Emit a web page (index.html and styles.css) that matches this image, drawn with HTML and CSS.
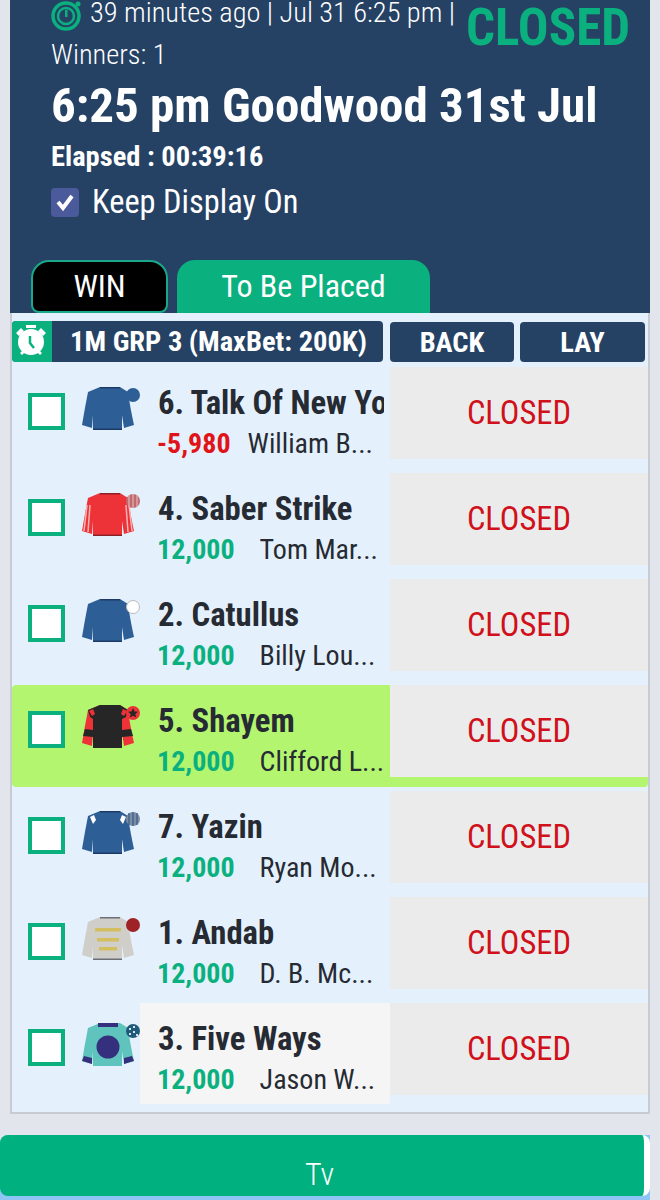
FILE: index.html
```html
<!DOCTYPE html>
<html lang="en">
<head>
<meta charset="UTF-8">
<meta name="viewport" content="width=device-width, initial-scale=1.0">
<title>6:25 pm Goodwood 31st Jul</title>
<link rel="stylesheet" href="styles.css">
</head>
<body>

<svg class="defs" width="0" height="0">
    <symbol id="shirt" viewBox="0 0 52 43">
        <path d="M18 0H38L46 5Q48 20 52 38L42 41L40 28V43H11V28L10 41L0 38Q3 20 6 5Z"/>
    </symbol>
</svg>

<div class="page">
    <header class="race-head">
        <div class="meta-top">
            <div class="meta">
                <div class="meta-line">
                    <svg class="timer" viewBox="0 0 30 32">
                        <circle cx="15" cy="16" r="13" fill="none" stroke="#0bb07f" stroke-width="3.500"/>
                        <circle cx="15" cy="16" r="8" fill="none" stroke="#0bb07f" stroke-width="2.500"/>
                        <path d="M14 10h2.500v7H14z" fill="#0bb07f"/>
                        <circle cx="27" cy="4" r="2.500" fill="#0bb07f"/>
                    </svg>
                    <span class="cond">39 minutes ago | Jul 31 6:25 pm |</span>
                </div>
                <div class="winners"><span class="cond">Winners: 1</span></div>
            </div>
            <div class="status"><span class="cond">CLOSED</span></div>
        </div>
        <h1 class="race-title"><span class="cond">6:25 pm Goodwood 31st Jul</span></h1>
        <div class="elapsed"><span class="cond">Elapsed : 00:39:16</span></div>
        <label class="keep-on">
            <span class="keep-box">
                <svg viewBox="0 0 28 28"><path d="M7 14l5 6 9-12" fill="none" stroke="#fff" stroke-width="4"/></svg>
            </span>
            <span class="cond">Keep Display On</span>
        </label>
        <div class="tabs">
            <div class="tab tab-win"><span class="cond-c">WIN</span></div>
            <div class="tab tab-place"><span class="cond-c">To Be Placed</span></div>
        </div>
    </header>

    <section class="market">
        <div class="market-bar">
            <div class="market-name">
                <span class="clock-box">
                    <svg viewBox="0 0 40 40" width="40" height="40">
                        <circle cx="19" cy="21" r="13" fill="#fff"/>
                        <path d="M14 4h10v3H14zM4 12l5-5 3 3-5 5zM34 12l-5-5-3 3 5 5zM8 32l3-3 2 2-3 3zM30 32l-3-3-2 2 3 3z" fill="#fff"/>
                        <path d="M18 15v7l4 5" fill="none" stroke="#0bb07f" stroke-width="2.500"/>
                    </svg>
                </span>
                <span class="market-label"><span class="cond-c">1M GRP 3 (MaxBet: 200K)</span></span>
            </div>
            <div class="side-btn"><span class="cond-c">BACK</span></div>
            <div class="side-btn side-lay"><span class="cond-c">LAY</span></div>
        </div>

        <div class="row">
            <span class="tick"></span>
            <svg class="silk" viewBox="0 0 60 46">
                <use href="#shirt" width="52" height="43" fill="#2d5e96"/>
                <path d="M18 0H38V1.500H18ZM11 41.500H40V43H11Z" fill="#1d3a66"/>
                <circle cx="51" cy="8" r="7" fill="#2d5e96"/>
            </svg>
            <div class="runner">
                <div class="name"><span class="cond">6. Talk Of New York</span></div>
                <div class="info"><span class="cond"><b class="pl pl-neg">-5,980</b><span class="jockey">William B...</span></span></div>
            </div>
            <div class="odds"><span class="cond-c">CLOSED</span></div>
        </div>

        <div class="row">
            <span class="tick"></span>
            <svg class="silk" viewBox="0 0 60 46">
                <use href="#shirt" width="52" height="43" fill="#ee3338"/>
                <path d="M5 12L2 38M8 12L6 39M44 12L46 39M47 12L50 38" stroke="#f5b5b5" stroke-width="1.500"/>
                <path d="M18 0H38V1.500H18ZM11 41.500H40V43H11Z" fill="#8c2228"/>
                <circle cx="51" cy="8" r="7" fill="#c06a70"/>
                <path d="M47 2v12M51 1v14M55 2v12" stroke="#e5b5b5" stroke-width="1.200"/>
            </svg>
            <div class="runner">
                <div class="name"><span class="cond">4. Saber Strike</span></div>
                <div class="info"><span class="cond"><b class="pl">12,000</b><span class="jockey">Tom Mar...</span></span></div>
            </div>
            <div class="odds"><span class="cond-c">CLOSED</span></div>
        </div>

        <div class="row">
            <span class="tick"></span>
            <svg class="silk" viewBox="0 0 60 46">
                <use href="#shirt" width="52" height="43" fill="#2d5e96"/>
                <path d="M18 0H38V1.500H18ZM11 41.500H40V43H11Z" fill="#1d3a66"/>
                <circle cx="51" cy="8" r="6.500" fill="#fff" stroke="#bbb"/>
            </svg>
            <div class="runner">
                <div class="name"><span class="cond">2. Catullus</span></div>
                <div class="info"><span class="cond"><b class="pl">12,000</b><span class="jockey">Billy Lou...</span></span></div>
            </div>
            <div class="odds"><span class="cond-c">CLOSED</span></div>
        </div>

        <div class="row row-fav">
            <span class="tick"></span>
            <svg class="silk" viewBox="0 0 60 46">
                <use href="#shirt" width="52" height="43" fill="#ee3338"/>
                <path d="M18 0H38L46 5 44 12 40 14V43H11V14L8 12 6 5Z" fill="#262626"/>
                <path d="M7 6l4-2 2 5-3 2zM45 6l-4-2-2 5 3 2z" fill="#ee3338"/>
                <path d="M3 24L11 25 11 32 1 31ZM49 24L40 25 40 32 51 31Z" fill="#262626"/>
                <circle cx="51" cy="8" r="7" fill="#ee3338"/>
                <path d="M51 3l1.500 3.500 3.500.3-2.700 2.300.9 3.500-3.200-1.900-3.200 1.900.9-3.500-2.700-2.300 3.500-.3z" fill="#262626"/>
            </svg>
            <div class="runner">
                <div class="name"><span class="cond">5. Shayem</span></div>
                <div class="info"><span class="cond"><b class="pl">12,000</b><span class="jockey">Clifford L...</span></span></div>
            </div>
            <div class="odds"><span class="cond-c">CLOSED</span></div>
        </div>

        <div class="row">
            <span class="tick"></span>
            <svg class="silk" viewBox="0 0 60 46">
                <use href="#shirt" width="52" height="43" fill="#2d5e96"/>
                <path d="M18 0H38V1.500H18ZM11 41.500H40V43H11Z" fill="#1d3a66"/>
                <path d="M8 6l4-2 2 5-3 4zM44 6l-4-2-2 5 3 4z" fill="#fff"/>
                <circle cx="51" cy="8" r="7" fill="#7b8ea6"/>
                <path d="M47 2v12M51 1v14M55 2v12" stroke="#3a5a85" stroke-width="1.200"/>
            </svg>
            <div class="runner">
                <div class="name"><span class="cond">7. Yazin</span></div>
                <div class="info"><span class="cond"><b class="pl">12,000</b><span class="jockey">Ryan Mo...</span></span></div>
            </div>
            <div class="odds"><span class="cond-c">CLOSED</span></div>
        </div>

        <div class="row">
            <span class="tick"></span>
            <svg class="silk" viewBox="0 0 60 46">
                <use href="#shirt" width="52" height="43" fill="#d0cec8"/>
                <path d="M18 0H38V1.500H18ZM11 41.500H40V43H11Z" fill="#6b6f78"/>
                <path d="M13 11H39V14.500H13ZM15 21H37V24.500H15ZM17 30H35V33.500H17Z" fill="#d4bf60"/>
                <circle cx="51" cy="8" r="7" fill="#9e2226"/>
            </svg>
            <div class="runner">
                <div class="name"><span class="cond">1. Andab</span></div>
                <div class="info"><span class="cond"><b class="pl">12,000</b><span class="jockey">D. B. Mc...</span></span></div>
            </div>
            <div class="odds"><span class="cond-c">CLOSED</span></div>
        </div>

        <div class="row row-last">
            <span class="tick"></span>
            <svg class="silk" viewBox="0 0 60 46">
                <use href="#shirt" width="52" height="43" fill="#5fc4bd"/>
                <path d="M16 0H36V4H16Z" fill="#35307e"/>
                <circle cx="26" cy="24" r="11.500" fill="#35307e"/>
                <path d="M2 33L10 35 10 41 0 38ZM50 33L42 35 42 41 52 38Z" fill="#35307e"/>
                <circle cx="51" cy="8" r="7" fill="#1f5a7a"/>
                <path d="M47 5h2v2h-2zM51 3h2v2h-2zM51 8h2v2h-2zM47 10h2v2h-2zM54 11h2v2h-2z" fill="#cfe6ef"/>
            </svg>
            <div class="runner">
                <div class="name"><span class="cond">3. Five Ways</span></div>
                <div class="info"><span class="cond"><b class="pl">12,000</b><span class="jockey">Jason W...</span></span></div>
            </div>
            <div class="odds"><span class="cond-c">CLOSED</span></div>
        </div>
    </section>

    <div class="tv-wrap">
        <div class="tv-btn"><span class="cond-c">Tv</span></div>
    </div>
</div>

</body>
</html>
```

FILE: styles.css
```css
* {
    box-sizing: border-box;
}
html, body {
    margin: 0;
    padding: 0;
}
body {
    font-family: Roboto, "Liberation Sans", sans-serif;
    background: #e2e6ec;
    height: 1200px;
    overflow: hidden;
}
.defs {
    display: block;
    height: 0;
}
.page {
    display: flex;
    flex-direction: column;
}
.cond, .cond-c {
    display: inline-block;
    white-space: nowrap;
    font-stretch: 75%;
}

.race-head {
    height: 313px;
    margin: 0 10px;
    padding: 0 20px 0 41px;
    background: #254265;
    color: #fff;
    display: flex;
    flex-direction: column;
}
.meta-top {
    display: flex;
    justify-content: space-between;
}
.meta-line {
    display: flex;
    gap: 9px;
    height: 32px;
    font-size: 28.4px;
    font-weight: 300;
    line-height: 26px;
}
.timer {
    width: 30px;
    height: 32px;
    flex: none;
}
.winners {
    margin-top: 9px;
    font-size: 28.4px;
    font-weight: 300;
    line-height: 28px;
}
.status {
    color: #0bb07f;
    font-size: 51px;
    font-weight: 700;
    line-height: 56px;
}
.race-title {
    margin: 9px 0 0;
    font-size: 49px;
    font-weight: 700;
    line-height: 56px;
}
.elapsed {
    margin-top: 7px;
    font-size: 28.5px;
    font-weight: 700;
    line-height: 32px;
}
.keep-on {
    display: flex;
    align-items: center;
    gap: 13px;
    margin-top: 12px;
    font-size: 32.4px;
    line-height: 34px;
    font-weight: 400;
}
.keep-box {
    width: 28px;
    height: 29px;
    border-radius: 4px;
    background: #4a5a9a;
    display: block;
}
.keep-box svg {
    display: block;
}
.tabs {
    display: flex;
    gap: 9px;
    margin: auto 0 0 -20px;
}
.tab {
    height: 53px;
    padding-bottom: 2px;
    display: flex;
    align-items: center;
    justify-content: center;
    font-size: 32px;
}
.tab-win {
    width: 137px;
    background: #000;
    border: 2px solid #1aa88a;
    border-radius: 18px 18px 8px 8px;
}
.tab-place {
    width: 253px;
    background: #0bb07f;
    border-radius: 18px 18px 0 0;
}

.market {
    margin: 0 10px;
    height: 801px;
    padding-top: 8px;
    background: #e4f1fc;
    border: 2px solid #c8ccd2;
    border-top: 0;
}
.market-bar {
    display: flex;
    height: 41px;
    margin-bottom: 5px;
}
.market-name {
    width: 371px;
    display: flex;
    border-radius: 4px;
    overflow: hidden;
    background: #254265;
}
.clock-box {
    width: 40px;
    background: #0bb07f;
    flex: none;
}
.clock-box svg {
    display: block;
}
.market-label {
    flex: 1;
    padding-left: 2px;
    display: flex;
    align-items: center;
    justify-content: center;
    color: #fff;
    font-size: 28.5px;
    font-weight: 700;
}
.side-btn {
    width: 124px;
    margin: 1px 0 0 7px;
    display: flex;
    align-items: center;
    justify-content: center;
    background: #254265;
    border-radius: 4px;
    color: #fff;
    font-size: 28.5px;
    font-weight: 700;
}
.side-lay {
    width: 125px;
    margin-left: 6px;
}

.row {
    display: flex;
    align-items: flex-start;
    height: 92px;
    margin-bottom: 14px;
}
.tick {
    width: 37px;
    height: 37px;
    margin: 26px 0 0 16px;
    border: 4px solid #0bb07f;
    background: #fff;
    flex: none;
}
.silk {
    width: 60px;
    height: 46px;
    margin: 20px 0 0 17px;
    flex: none;
}
.runner {
    width: 226px;
    margin-left: 16px;
    padding-top: 18px;
    overflow: hidden;
    color: #262a33;
}
.name {
    font-size: 32.7px;
    font-weight: 700;
    line-height: 36px;
}
.info {
    margin-top: 6px;
    margin-left: -1px;
    font-size: 28px;
    line-height: 34px;
}
.pl {
    color: #0bb07f;
    font-weight: 700;
}
.pl-neg {
    color: #e01418;
    margin-right: -8px;
}
.jockey {
    margin-left: 25px;
}
.odds {
    width: 258px;
    height: 92px;
    margin-left: auto;
    display: flex;
    align-items: center;
    justify-content: center;
    background: #ebebeb;
    color: #d0101a;
    font-size: 32.6px;
}
.row-fav {
    height: 102px;
    margin-bottom: 4px;
    background: #b3f56f;
    border-radius: 4px;
}
.row-last .runner {
    background: #f5f5f5;
    margin-left: -2px;
    padding-left: 18px;
    width: 250px;
    height: 101px;
}

.tv-wrap {
    width: 650px;
    height: 65px;
    margin-top: 21px;
    background: #8ec5f5;
    border-radius: 8px 0 0 0;
}
.tv-btn {
    height: 61px;
    padding: 16px 5px 0 0;
    display: flex;
    align-items: center;
    justify-content: center;
    background: #00b07f;
    border-right: 6px solid #fff;
    border-radius: 8px;
    color: #fff;
    font-size: 32px;
    font-weight: 300;
}
```
